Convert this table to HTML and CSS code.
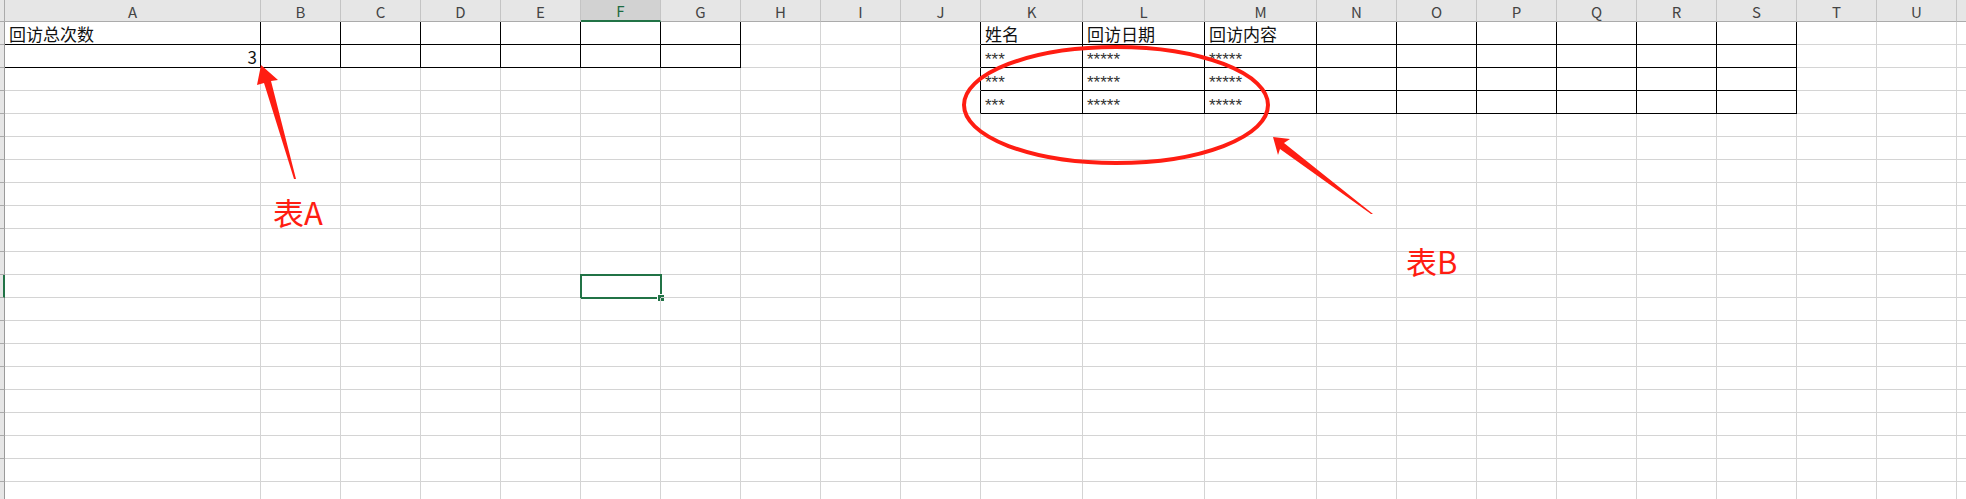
FILE: index.html
```html
<!DOCTYPE html>
<html lang="zh-CN">
<head>
  <meta charset="UTF-8" />
  <meta name="viewport" content="width=device-width, initial-scale=1.0"/>
  <title>回访统计</title>
  <link rel="stylesheet" href="styles.css">
</head>
<body>

  <div class="sheet">
    <div class="grid" id="grid"></div>

    <svg class="marks" width="1966" height="499" viewBox="0 0 1966 499">
      <ellipse cx="1116" cy="105" rx="152" ry="58" fill="none" stroke="#ff1d12" stroke-width="4" />
      <polygon fill="#ff1d12" points="261,65 278,80 271,81 296,179 294,179 264,83 257,85" />
      <polygon fill="#ff1d12" points="1273,137 1290,139 1284,143 1373,214 1371,214 1280,149 1278,155" />
    </svg>

    <div class="label label-a">表A</div>
    <div class="label label-b">表B</div>
  </div>

  <script>
    const grid = document.getElementById('grid');

    // column letters and widths (px, incl. right border); last one is cut by the window
    const cols = [
      ['A', 256], ['B', 80], ['C', 80], ['D', 80], ['E', 80], ['F', 80], ['G', 80],
      ['H', 80], ['I', 80], ['J', 80], ['K', 102], ['L', 122], ['M', 112],
      ['N', 80], ['O', 80], ['P', 80], ['Q', 80], ['R', 80], ['S', 80], ['T', 80], ['U', 80], ['', 80]
    ];
    const rowCount = 21;
    const selected = { col: 'F', row: 12 };

    const data = {
      A1: '回访总次数', A2: '3',
      K1: '姓名', L1: '回访日期', M1: '回访内容',
      K2: '***', L2: '*****', M2: '*****',
      K3: '***', L3: '*****', M3: '*****',
      K4: '***', L4: '*****', M4: '*****'
    };

    // ranges with thin black borders: [firstCol, lastCol, firstRow, lastRow]
    const tables = [['A', 'G', 1, 2], ['K', 'S', 1, 4]];

    grid.style.gridTemplateColumns = '5px ' + cols.map(c => c[1] + 'px').join(' ');

    const idx = l => cols.findIndex(c => c[0] === l);

    function inTable(ci, r) {
      return tables.some(t => ci >= idx(t[0]) && ci <= idx(t[1]) && r >= t[2] && r <= t[3]);
    }
    function leftOfTable(ci, r) {
      return tables.some(t => ci === idx(t[0]) - 1 && r >= t[2] && r <= t[3]);
    }

    function el(cls, text) {
      const d = document.createElement('div');
      d.className = cls;
      if (text) d.textContent = text;
      grid.appendChild(d);
      return d;
    }

    // header row
    el('corner');
    cols.forEach(c => el('col-head' + (c[0] === selected.col ? ' active' : ''), c[0]));

    for (let r = 1; r <= rowCount; r++) {
      el('row-head' + (r === selected.row ? ' active' : ''));
      cols.forEach((c, ci) => {
        const key = c[0] + r;
        let cls = 'cell';
        if (inTable(ci, r)) cls += ' boxed';
        else if (leftOfTable(ci, r)) cls += ' edge';
        const text = c[0] ? data[key] : '';
        if (text && /^\d+$/.test(text)) cls += ' num';
        if (text && text[0] === '*') cls += ' mask';
        if (c[0] === selected.col && r === selected.row) cls += ' selected';
        el(cls, text);
      });
    }
  </script>

</body>
</html>
```

FILE: styles.css
```css
body {
  margin: 0;
  background: #fff;
  font-family: "Noto Sans CJK SC", "Noto Sans", sans-serif;
  overflow: hidden;
}

.sheet {
  position: relative;
  width: 1966px;
  height: 499px;
  overflow: hidden;
}

.grid {
  display: grid;
  grid-template-rows: 22px;
  grid-auto-rows: 23px;
}

.corner,
.col-head {
  background: #e6e6e6;
  border-bottom: 1px solid #ababab;
  box-sizing: border-box;
}

.corner {
  border-right: 1px solid #ababab;
}

.col-head {
  border-right: 1px solid #c4c4c4;
  color: #444;
  font-size: 15px;
  display: flex;
  align-items: center;
  justify-content: center;
  padding-top: 1px;
}

.col-head.active {
  background: #d2d2d2;
  color: #1e6b41;
  border-bottom: 2px solid #217346;
}

.row-head {
  background: #e6e6e6;
  border-right: 1px solid #9a9a9a;
  border-bottom: 1px solid #ababab;
  box-sizing: border-box;
}

.row-head.active {
  border-right: 2px solid #217346;
}

.cell {
  box-sizing: border-box;
  border-right: 1px solid #d4d4d4;
  border-bottom: 1px solid #d4d4d4;
  font-size: 17px;
  line-height: 22px;
  color: #111;
  padding: 1px 3px 0 4px;
  white-space: nowrap;
  position: relative;
}

.cell.boxed {
  border-right-color: #000;
  border-bottom-color: #000;
}

.cell.edge {
  border-right-color: #000;
}

.cell.num {
  text-align: right;
}

.cell.mask {
  font-family: "Liberation Sans", sans-serif;
  color: #333;
  padding-top: 6px;
  line-height: 18px;
}

.cell.selected {
  outline: 2px solid #217346;
  outline-offset: -1px;
}

.cell.selected::after {
  content: "";
  position: absolute;
  right: -4px;
  bottom: -4px;
  width: 6px;
  height: 6px;
  background: #217346;
  border: 1px solid #fff;
  border-right: none;
  border-bottom: none;
}

.marks {
  position: absolute;
  top: 0;
  left: 0;
  pointer-events: none;
}

.label {
  position: absolute;
  color: #ff1d12;
  font-size: 31px;
  line-height: 1;
}

.label-a {
  left: 273px;
  top: 196px;
}

.label-b {
  left: 1406px;
  top: 245px;
}
```
